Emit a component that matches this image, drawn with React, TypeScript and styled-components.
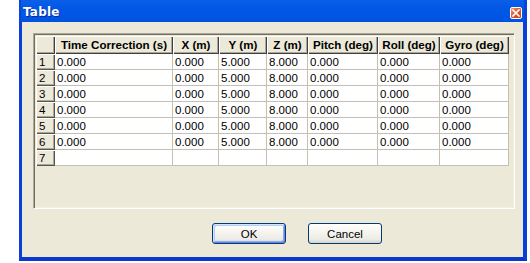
import React from "react";
import styled, { createGlobalStyle } from "styled-components";

const Global = createGlobalStyle`
  html, body { margin: 0; padding: 0; background: #ffffff; }
  body { font-family: "Liberation Sans", Arial, sans-serif; }
`;

const Window = styled.div`
  margin-left: 19px;
  width: 508px;
  display: flex;
  flex-direction: column;
`;

const TitleBar = styled.div`
  height: 22px;
  box-sizing: border-box;
  display: flex;
  align-items: center;
  justify-content: space-between;
  padding: 0 5px 0 4px;
  background: linear-gradient(180deg, #0b5fe9 0%, #0058e6 40%, #0053e0 100%);
  box-shadow: inset 2px 0 #0a44d8, inset -3px 0 #0a44d8;
`;

const Title = styled.span`
  color: #ffffff;
  font-family: "DejaVu Sans", "Liberation Sans", sans-serif;
  font-weight: bold;
  font-size: 12px;
  letter-spacing: 0.2px;
  text-shadow: 1px 1px 0 #0a2a9a;
  margin-top: 2px;
`;

const CloseButton = styled.div`
  width: 12px;
  height: 12px;
  margin-top: 4px;
  box-sizing: border-box;
  border: 1px solid #ffffff;
  border-radius: 2px;
  background: linear-gradient(135deg, #f09a7a 0%, #e25a30 45%, #c8401a 100%);
  display: flex;
  align-items: center;
  justify-content: center;
`;

const Frame = styled.div`
  display: flex;
  border-left: 3px solid #0a3fd8;
  border-right: 4px solid #0a3fd8;
  border-bottom: 4px solid #0838cc;
`;

const Client = styled.div`
  flex: 1;
  height: 235px;
  background: #ece9d8;
  display: flex;
  flex-direction: column;
  padding: 11px 8px 0 11px;
  box-sizing: border-box;
`;

const GridFrame = styled.div`
  height: 176px;
  box-sizing: border-box;
  padding: 1px;
  border-top: 1px solid #aca899;
  border-left: 1px solid #aca899;
  border-right: 1px solid #ffffff;
  border-bottom: 1px solid #ffffff;
  box-shadow: inset 1px 1px #716f64, inset -1px -1px #f1efe2;
  padding: 2px;
`;

const Grid = styled.div`
  display: grid;
  grid-template-columns: 19px 118px 46px 48px 41px 70px 62px 69px;
  grid-template-rows: 18px repeat(7, 16px);
`;

const HeaderCell = styled.div`
  background: #ece9d8;
  box-shadow: inset 1px 1px #ffffff, inset -1px -1px #404040, inset -2px -2px #aca899;
  font-weight: bold;
  font-size: 11.6px;
  color: #000;
  display: flex;
  align-items: center;
  justify-content: center;
  white-space: nowrap;
  padding-bottom: 1px;
  box-sizing: border-box;
`;

const RowHeader = styled.div`
  background: #ece9d8;
  box-shadow: inset 1px 1px #ffffff, inset -1px -1px #555555, inset -2px -2px #aca899;
  font-size: 11.5px;
  color: #000;
  display: flex;
  align-items: center;
  padding-left: 3px;
  box-sizing: border-box;
`;

const Cell = styled.div`
  background: #ffffff;
  box-shadow: inset -1px -1px #c4c1b4;
  font-size: 11.5px;
  color: #000;
  display: flex;
  align-items: center;
  padding-left: 2px;
  box-sizing: border-box;
  white-space: nowrap;
`;

const ButtonRow = styled.div`
  display: flex;
  gap: 22px;
  padding-left: 179px;
  margin-top: 14px;
`;

const Button = styled.button<{ $focused?: boolean }>`
  width: 74px;
  height: 21px;
  padding: 0;
  border: 1px solid #003c74;
  border-radius: 3px;
  background: linear-gradient(180deg, #ffffff 0%, #f6f5f1 40%, #ecebe5 80%, #d8d3c8 100%);
  font-family: "Liberation Sans", Arial, sans-serif;
  font-size: 11.5px;
  color: #000;
  box-shadow: ${(p) =>
    p.$focused
      ? "inset 1px 1px #cee7ff, inset -1px -1px #6982ee, inset 2px 2px #bccbf5, inset -2px -2px #89ade4"
      : "none"};
`;

const headers = [
  "Time Correction (s)",
  "X (m)",
  "Y (m)",
  "Z (m)",
  "Pitch (deg)",
  "Roll (deg)",
  "Gyro (deg)",
];

const rowValues = ["0.000", "0.000", "5.000", "8.000", "0.000", "0.000", "0.000"];

export default function App() {
  const rows = [1, 2, 3, 4, 5, 6, 7];
  return (
    <>
      <Global />
      <Window>
        <TitleBar>
          <Title>Table</Title>
          <CloseButton>
            <svg width="8" height="8" viewBox="0 0 8 8">
              <path d="M1 1 L7 7 M7 1 L1 7" stroke="#ffffff" strokeWidth="1.6" strokeLinecap="square" />
            </svg>
          </CloseButton>
        </TitleBar>
        <Frame>
          <Client>
            <GridFrame>
              <Grid>
                <HeaderCell />
                {headers.map((h) => (
                  <HeaderCell key={h}>{h}</HeaderCell>
                ))}
                {rows.map((r) => (
                  <React.Fragment key={r}>
                    <RowHeader>{r}</RowHeader>
                    {rowValues.map((v, i) => (
                      <Cell key={i}>{r < 7 ? v : ""}</Cell>
                    ))}
                  </React.Fragment>
                ))}
              </Grid>
            </GridFrame>
            <ButtonRow>
              <Button $focused>OK</Button>
              <Button>Cancel</Button>
            </ButtonRow>
          </Client>
        </Frame>
      </Window>
    </>
  );
}
